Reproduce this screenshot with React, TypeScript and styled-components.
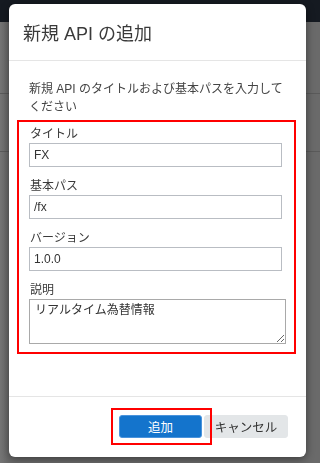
import React, { useState } from 'react';
import styled, { createGlobalStyle } from 'styled-components';

const GlobalStyle = createGlobalStyle`
	html, body {
		margin: 0;
		padding: 0;
		height: 100%;
		overflow: hidden;
	}
	body {
		font-family: 'Liberation Sans', 'Noto Sans CJK JP', sans-serif;
		background: #6c6c6c;
	}
`;

const Page = styled.div`
	height: 463px;
	display: flex;
	flex-direction: column;
`;

const TopBar = styled.div`
	height: 22px;
	background: #151a21;
	flex: none;
`;

const Backdrop = styled.div`
	flex: 1;
	background: linear-gradient(90deg, #757575 0, #6a6a6a 8px);
`;

const BackdropRule = styled.div<{ $top: number }>`
	height: 1px;
	margin-top: ${p => p.$top}px;
	background: #5a5a5a;
`;

const Dialog = styled.div`
	position: fixed;
	top: 4px;
	left: 9px;
	width: 297px;
	height: 453px;
	background: #fff;
	border-radius: 6px;
	box-shadow: 0 2px 8px rgba(0, 0, 0, 0.45);
	display: flex;
	flex-direction: column;
	color: #333;
`;

const Header = styled.div`
	height: 56px;
	padding: 0 14px;
	display: flex;
	align-items: center;
	border-bottom: 1px solid #e5e5e5;
	font-size: 18px;
	color: #3a3a3a;
`;

const Body = styled.div`
	flex: 1;
	padding: 19px 20px 0;
`;

const Lead = styled.p`
	margin: 0 0 10px;
	font-size: 12px;
	line-height: 18px;
	color: #444;
`;

const Form = styled.div`
	position: relative;
	display: flex;
	flex-direction: column;
	gap: 11px;
`;

const Highlight = styled.div<{ $inset: string }>`
	position: absolute;
	inset: ${p => p.$inset};
	border: 2px solid #f00;
	pointer-events: none;
`;

const Field = styled.label`
	display: flex;
	flex-direction: column;
`;

const FieldLabel = styled.span`
	font-size: 12px;
	line-height: 17px;
	padding-left: 1px;
	color: #3a3a3a;
`;

const Input = styled.input`
	box-sizing: border-box;
	width: 253px;
	height: 24px;
	margin: 0;
	padding: 0 4px;
	border: 1px solid #b9bdc3;
	border-radius: 0;
	font-family: inherit;
	font-size: 12px;
	color: #333;
	outline: none;
`;

const TextArea = styled.textarea`
	box-sizing: border-box;
	width: 257px;
	height: 45px;
	margin: 0;
	padding: 2px 5px;
	border: 1px solid #a9a9a9;
	font-family: inherit;
	font-size: 12px;
	line-height: 17px;
	color: #333;
	outline: none;
	resize: vertical;
`;

const Footer = styled.div`
	height: 61px;
	border-top: 1px solid #e5e5e5;
	display: flex;
	justify-content: flex-end;
	align-items: flex-start;
	gap: 2px;
	padding: 18px 18px 0 0;
	box-sizing: border-box;
`;

const ButtonWrap = styled.div`
	position: relative;
	display: flex;
`;

const Button = styled.button<{ $primary?: boolean }>`
	box-sizing: border-box;
	width: ${p => (p.$primary ? 83 : 84)}px;
	height: 23px;
	padding: 0;
	border-radius: 3px;
	border: 1px solid ${p => (p.$primary ? '#4a93dc' : '#e3e6e8')};
	background: ${p => (p.$primary ? '#1474cc' : '#e3e6e8')};
	color: ${p => (p.$primary ? '#fff' : '#333')};
	font-family: inherit;
	font-size: 12.5px;
	cursor: pointer;
`;

export default function App() {
	const [title, setTitle] = useState('FX');
	const [path, setPath] = useState('/fx');
	const [version, setVersion] = useState('1.0.0');
	const [description, setDescription] = useState('リアルタイム為替情報');

	return (
		<>
			<GlobalStyle />
			<Page>
				<TopBar />
				<Backdrop>
					<BackdropRule $top={71} />
					<BackdropRule $top={57} />
				</Backdrop>
			</Page>
			<Dialog>
				<Header>新規 API の追加</Header>
				<Body>
					<Lead>新規 API のタイトルおよび基本パスを入力してください</Lead>
					<Form>
						<Field>
							<FieldLabel>タイトル</FieldLabel>
							<Input value={title} onChange={e => setTitle(e.target.value)} />
						</Field>
						<Field>
							<FieldLabel>基本パス</FieldLabel>
							<Input value={path} onChange={e => setPath(e.target.value)} />
						</Field>
						<Field>
							<FieldLabel>バージョン</FieldLabel>
							<Input value={version} onChange={e => setVersion(e.target.value)} />
						</Field>
						<Field>
							<FieldLabel>説明</FieldLabel>
							<TextArea value={description} onChange={e => setDescription(e.target.value)} />
						</Field>
						<Highlight $inset="-6px -10px -10px -12px" />
					</Form>
				</Body>
				<Footer>
					<ButtonWrap>
						<Button $primary>追加</Button>
						<Highlight $inset="-7px -10px -7px -8px" />
					</ButtonWrap>
					<Button>キャンセル</Button>
				</Footer>
			</Dialog>
		</>
	);
}
